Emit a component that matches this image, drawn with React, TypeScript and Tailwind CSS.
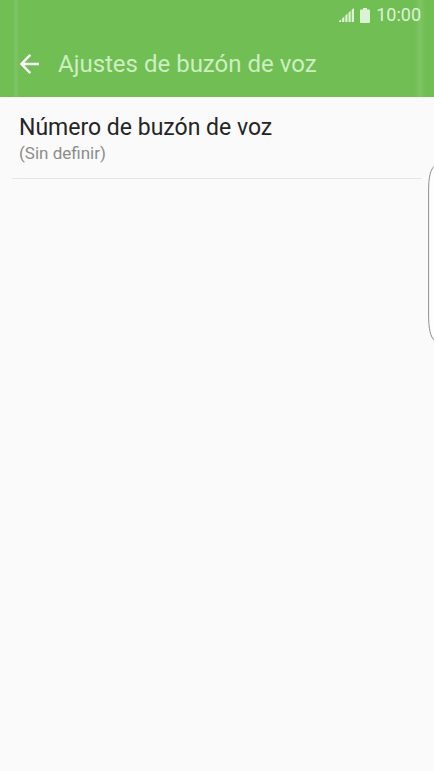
import React from 'react';

interface Setting {
  id: string;
  title: string;
  summary: string;
}

const SETTINGS: Setting[] = [
  { id: 'voicemail-number', title: 'Número de buzón de voz', summary: '(Sin definir)' },
];

const SignalIcon: React.FC = () => (
  <svg width="15" height="14" viewBox="0 0 15 14" fill="currentColor" aria-hidden="true">
    <path d="M0 13 L2.2 11.4 V14 H0 Z" />
    <path d="M3.1 10.6 L5.3 8.6 V14 H3.1 Z" />
    <path d="M6.3 7.6 L8.5 5.6 V14 H6.3 Z" />
    <path d="M9.5 4.7 L11.7 2.7 V14 H9.5 Z" />
    <path d="M12.7 1.8 L15 0 V14 H12.7 Z" />
  </svg>
);

const BatteryIcon: React.FC = () => (
  <svg width="10" height="15" viewBox="0 0 10 15" fill="currentColor" aria-hidden="true">
    <path d="M3 0 H7 V1.6 H9 Q10 1.6 10 2.6 V14 Q10 15 9 15 H1 Q0 15 0 14 V2.6 Q0 1.6 1 1.6 H3 Z" />
  </svg>
);

const BackIcon: React.FC = () => (
  <svg width="20" height="20" viewBox="0 0 20 20" fill="none" stroke="currentColor" strokeWidth="2.4" aria-hidden="true">
    <path d="M10.3 0.9 L1.4 10 L10.3 19.1 M1.4 10 H19" />
  </svg>
);

const StatusBar: React.FC = () => (
  <div className="mb-px flex h-[30px] items-center justify-end gap-1.5 pr-[13px] text-[#dcf3d3]">
    <SignalIcon />
    <BatteryIcon />
    <span className="text-lg leading-7">10:00</span>
  </div>
);

const SettingRow: React.FC<{ setting: Setting }> = ({ setting }) => (
  <li className="mx-3 border-b border-[#e4e4e4]">
    <button type="button" className="block w-full px-[7px] pt-[17px] pb-3.5 text-left">
      <span className="block text-[23px] leading-7 text-[#252525]">{setting.title}</span>
      <span className="block text-[17px] leading-[22px] text-[#8c8c8c]">{setting.summary}</span>
    </button>
  </li>
);

export default function App() {
  return (
    <div className="relative min-h-screen w-full overflow-hidden bg-[#fafafa] font-[Roboto,sans-serif]">
      <header className="bg-[#70be54]">
        <StatusBar />
        <div className="flex h-[66px] items-center pl-5">
          <button type="button" aria-label="Atrás" className="text-white">
            <BackIcon />
          </button>
          <h1 className="ml-[18px] text-2xl leading-8 text-[#cdefc0]">Ajustes de buzón de voz</h1>
        </div>
      </header>

      <main>
        <ul>
          {SETTINGS.map((setting) => (
            <SettingRow key={setting.id} setting={setting} />
          ))}
        </ul>
      </main>

      {/* Light along the curved edges of the glass */}
      <div className="pointer-events-none absolute inset-y-0 left-3 w-2 bg-gradient-to-r from-white/0 via-white/10 to-white/0" />
      <div className="pointer-events-none absolute inset-y-0 right-2 w-3 bg-gradient-to-r from-white/0 via-white/10 to-white/0" />

      {/* Edge panel handle */}
      <svg
        className="pointer-events-none absolute top-[165px] right-0"
        width="6"
        height="176"
        viewBox="0 0 6 176"
        fill="#fdfdfd"
        stroke="#8f8f8f"
        aria-hidden="true"
      >
        <path d="M6.5 1 C2.5 4 0.6 12 0.6 26 V150 C0.6 164 2.5 172 6.5 175.5" />
      </svg>
    </div>
  );
}
